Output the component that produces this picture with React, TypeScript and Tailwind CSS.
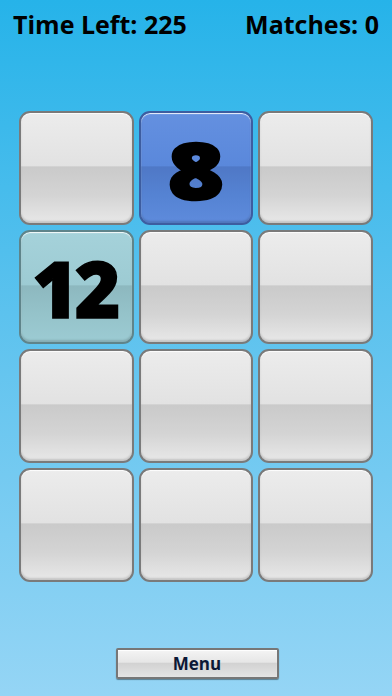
import React from 'react';

type Tile = { value?: number; tone: 'blank' | 'blue' | 'teal'; fit?: string };

const tiles: Tile[] = [
  { tone: 'blank' }, { value: 8, tone: 'blue', fit: 'scale-x-[1.22] [-webkit-text-stroke:2.5px_black]' }, { tone: 'blank' },
  { value: 12, tone: 'teal', fit: 'tracking-[-3px] pr-[3px] [-webkit-text-stroke:1.5px_black]' }, { tone: 'blank' }, { tone: 'blank' },
  { tone: 'blank' }, { tone: 'blank' }, { tone: 'blank' },
  { tone: 'blank' }, { tone: 'blank' }, { tone: 'blank' },
];

const toneClass = {
  blank:
    'border-[#7a7a7a] bg-[linear-gradient(to_bottom,#ececec_0%,#e2e2e2_48%,#cacaca_49%,#d4d4d4_75%,#e8e8e8_100%)]',
  blue:
    'border-[#3d5da0] bg-[linear-gradient(to_bottom,#6490e0_0%,#5a88db_48%,#4f78c6_49%,#5583d3_75%,#5e8bdc_100%)]',
  teal:
    'border-[#5f848a] bg-[linear-gradient(to_bottom,#a5d2da_0%,#9dcbd3_48%,#8db8bf_49%,#95c3ca_75%,#9ccbd3_100%)]',
};

const TileCard = ({ tile }: { tile: Tile }) => (
  <div
    className={`relative h-[114px] rounded-[11px] border-2 shadow-[inset_0_1px_1px_rgba(255,255,255,0.9),inset_0_-2px_2px_rgba(0,0,0,0.15)] flex items-center justify-center ${toneClass[tile.tone]}`}
  >
    {tile.value !== undefined && (
      <span
        className={`font-['Open_Sans',sans-serif] font-extrabold text-[78px] leading-none text-black mt-[2px] ${tile.fit ?? ''}`}
      >
        {tile.value}
      </span>
    )}
  </div>
);

export default function App() {
  return (
    <div className="w-[392px] h-[696px] flex flex-col bg-[linear-gradient(to_bottom,#26b3e9_0%,#5cc2ee_45%,#95d5f5_100%)] font-['Open_Sans',sans-serif]">
      {/* Header */}
      <div className="flex justify-between items-center px-[13px] pt-[6px] h-[44px]">
        <span className="font-bold text-[25px] text-black">Time Left: 225</span>
        <span className="font-bold text-[25px] text-black">Matches: 0</span>
      </div>

      {/* Board */}
      <div className="grid grid-cols-3 gap-x-[5px] gap-y-[5px] px-[19px] mt-[67px]">
        {tiles.map((t, i) => (
          <TileCard key={i} tile={t} />
        ))}
      </div>

      {/* Menu */}
      <div className="flex justify-center mt-auto mb-[17px]">
        <button className="w-[163px] h-[31px] ml-[2px] border-2 border-[#777] rounded-[2px] bg-[linear-gradient(to_bottom,#f4f4f4_0%,#e6e6e6_45%,#d2d2d2_50%,#e4e4e4_100%)] shadow-[inset_0_1px_1px_#fff,0_1px_1px_rgba(0,0,0,0.4)] font-bold text-[17px] text-[#0c1836] leading-none">
          Menu
        </button>
      </div>
    </div>
  );
}
